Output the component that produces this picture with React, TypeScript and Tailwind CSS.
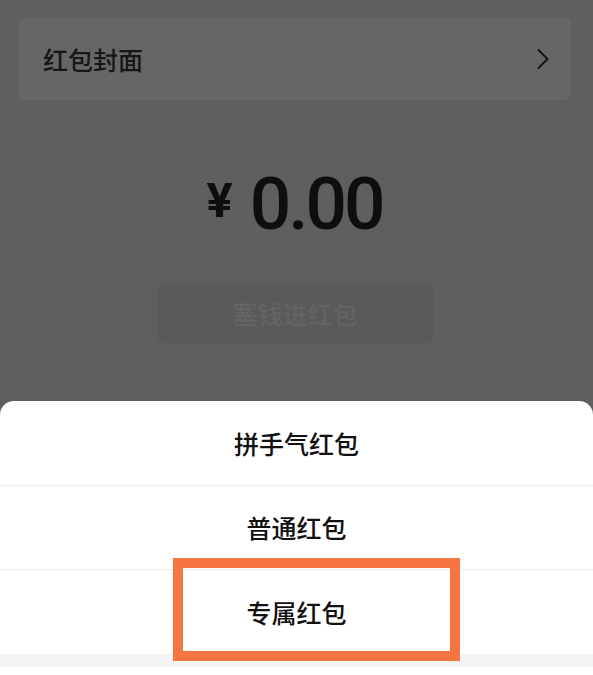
import React from "react";

const cjk = { fontFamily: '"Noto Sans CJK SC", "Noto Sans", sans-serif' };
const num = { fontFamily: 'Roboto, "Liberation Sans", sans-serif' };

export default function App() {
  return (
    <div className="relative w-[593px] h-[675px] overflow-hidden bg-[#5f5f5f]" style={cjk}>
      <div className="flex flex-col">
        <div className="mt-[18px] ml-[19px] mr-[22px] h-[82px] rounded-[6px] bg-[#666666] flex items-center justify-between pl-[24px] pr-[22px]">
          <span className="text-[25px] leading-none font-medium text-[#161616]">红包封面</span>
          <svg width="12" height="20" viewBox="0 0 12 20" fill="none">
            <polyline points="1.5,1 10.5,10 1.5,19" stroke="#111" strokeWidth="1.8" strokeLinecap="round" strokeLinejoin="round" />
          </svg>
        </div>

        <div className="mt-[78px] flex justify-center items-start pr-[4px]" style={num}>
          <span className="text-[49px] leading-none font-bold text-[#0e0e0e] mt-[-2px] mr-[17px]">¥</span>
          <span className="text-[73px] leading-[52px] font-medium tracking-[-3px] text-[#0e0e0e]">0.00</span>
        </div>

        <div className="mt-[53px] ml-[157px] w-[276px] h-[60px] rounded-[6px] bg-[#5a5a5a] flex items-center justify-center">
          <span className="text-[25px] leading-none font-medium text-[#646464]">塞钱进红包</span>
        </div>
      </div>

      <div className="absolute left-0 right-0 top-[401px] bottom-0 bg-white rounded-t-[14px] flex flex-col">
        <div className="h-[85px] flex items-center justify-center border-b border-[#ececec]">
          <span className="text-[25px] leading-none font-medium text-[#111]">拼手气红包</span>
        </div>
        <div className="h-[84px] flex items-center justify-center border-b border-[#ececec]">
          <span className="text-[25px] leading-none font-medium text-[#111]">普通红包</span>
        </div>
        <div className="h-[84px] flex items-center justify-center">
          <span className="text-[25px] leading-none font-medium text-[#111]">专属红包</span>
        </div>
        <div className="h-[13px] bg-[#f4f4f4]" />
        <div className="flex-1 bg-white" />
      </div>

      <div className="absolute left-[173px] top-[558px] w-[287px] h-[103px] border-[10.5px] border-[#f77443]" />
    </div>
  );
}
